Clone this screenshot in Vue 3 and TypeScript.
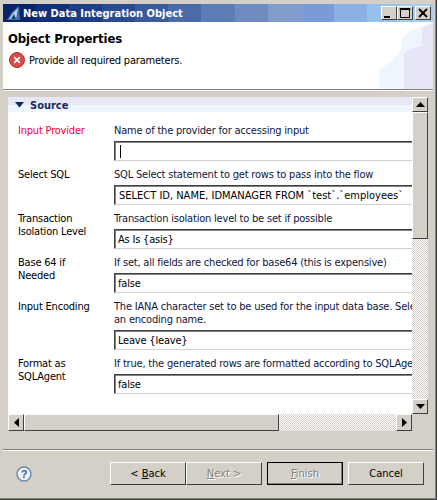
<script setup lang="ts">
interface Row { label: string; required?: boolean; desc: string[]; value: string; caret?: boolean; mono?: boolean }
const rows: Row[] = [
  { label: 'Input Provider', required: true, desc: ['Name of the provider for accessing input'], value: '', caret: true },
  { label: 'Select SQL', desc: ['SQL Select statement to get rows to pass into the flow'], value: 'SELECT ID, NAME, IDMANAGER FROM `test`.`employees`', mono: true },
  { label: 'Transaction Isolation Level', desc: ['Transaction isolation level to be set if possible'], value: 'As Is {asis}' },
  { label: 'Base 64 if Needed', desc: ['If set, all fields are checked for base64 (this is expensive)'], value: 'false' },
  { label: 'Input Encoding', desc: ['The IANA character set to be used for the input data base. Select', 'an encoding name.'], value: 'Leave {leave}' },
  { label: 'Format as SQLAgent', desc: ['If true, the generated rows are formatted according to SQLAgent'], value: 'false' },
]
const bands = ['#0a246a', '#12307a', '#1d3d84', '#2b4b90', '#3a5a9b', '#4a6aa8', '#5c7cb5', '#6f8cc0', '#7f9ccb', '#7b9bd6', '#8ab0e4', '#97c0ea', '#a6caf0']
</script>

<template>
  <div class="window">
    <div class="titlebar">
      <div class="bands"><span v-for="b in bands" :key="b" class="band" :style="{ background: b }"></span></div>
      <svg class="appicon" width="16" height="16" viewBox="0 0 16 16">
        <path d="M1 15 L6 7 L13 1 L14 15 Z" fill="#3d6fa8" />
        <path d="M3 14 L7 8 L12 3 L10 14 Z" fill="#b9cfe6" />
        <path d="M5 14 L8 9 L10 14 Z" fill="#1c3c70" />
      </svg>
      <span class="title">New Data Integration Object</span>
      <div class="winbtns">
        <button class="wb"><svg width="14" height="12" viewBox="0 0 14 12"><rect x="2" y="9" width="6" height="2" fill="#000" /></svg></button>
        <button class="wb wb-gap"><svg width="14" height="12" viewBox="0 0 14 12"><path d="M2.5 2.5h9v8h-9z M2 1.5h10v1H2z" fill="none" stroke="#000" /></svg></button>
        <button class="wb wb-x"><svg width="14" height="12" viewBox="0 0 14 12"><path d="M3 2 L11 10 M11 2 L3 10" stroke="#000" stroke-width="1.8" /></svg></button>
      </div>
    </div>

    <div class="banner">
      <svg class="swoosh" width="100" height="67" viewBox="0 0 100 67">
        <path d="M46 67 V48 L57 40 L64 33 L69 26 V16 L79 8 L89 4 L100 1 V67 Z" fill="#eef5fd" />
        <path d="M71 67 V31 L80 26 L89 24 V6 L100 1 V67 Z" fill="#e6e6f6" />
      </svg>
      <h1 class="heading">Object Properties</h1>
      <div class="message">
        <svg width="16" height="16" viewBox="0 0 16 16">
          <circle cx="8" cy="8" r="7.5" fill="#dc4a4a" stroke="#b23232" />
          <path d="M5.2 5.2 L10.8 10.8 M10.8 5.2 L5.2 10.8" stroke="#fff" stroke-width="1.8" />
        </svg>
        <span>Provide all required parameters.</span>
      </div>
    </div>
    <div class="etched"></div>

    <div class="body">
      <div class="scrollgrid">
        <div class="viewport">
          <div class="section">
            <div class="section-head">
              <svg width="10" height="6" viewBox="0 0 10 6"><path d="M0 0 H9 L4.5 5.5 Z" fill="#14285f" /></svg>
              <span>Source</span>
            </div>
            <div class="rows">
              <div v-for="r in rows" :key="r.label" class="row">
                <div class="label" :class="{ required: r.required }">{{ r.label }}</div>
                <div class="field">
                  <div class="desc"><div v-for="d in r.desc" :key="d">{{ d }}</div></div>
                  <div class="input" :class="{ mono: r.mono }"><span v-if="r.caret" class="caret"></span>{{ r.value }}</div>
                </div>
              </div>
            </div>
          </div>
        </div>
        <div class="vbar">
          <div class="arrow"><svg width="9" height="5" viewBox="0 0 9 5"><path d="M0 5 H9 L4.5 0 Z" fill="#000" /></svg></div>
          <div class="thumb-v"></div>
          <div class="track"></div>
          <div class="arrow"><svg width="9" height="5" viewBox="0 0 9 5"><path d="M0 0 H9 L4.5 5 Z" fill="#000" /></svg></div>
        </div>
        <div class="hbar">
          <div class="arrow"><svg width="5" height="9" viewBox="0 0 5 9"><path d="M5 0 V9 L0 4.5 Z" fill="#000" /></svg></div>
          <div class="thumb-h"></div>
          <div class="track"></div>
          <div class="arrow"><svg width="5" height="9" viewBox="0 0 5 9"><path d="M0 0 V9 L5 4.5 Z" fill="#000" /></svg></div>
        </div>
      </div>
    </div>

    <div class="etched"></div>
    <div class="footer">
      <svg class="help" width="16" height="16" viewBox="0 0 16 16">
        <circle cx="8" cy="8" r="7" fill="#eef2f8" stroke="#6d86ad" stroke-width="1.4" />
        <text x="8" y="12" text-anchor="middle" font-size="11" font-weight="700" font-family="Liberation Sans" fill="#3d5c8f">?</text>
      </svg>
      <div class="buttons">
        <div class="pair">
          <button class="btn"><span>&lt; <u>B</u>ack</span></button>
          <button class="btn disabled"><span><u>N</u>ext &gt;</span></button>
        </div>
        <button class="btn default disabled"><span><u>F</u>inish</span></button>
        <button class="btn">Cancel</button>
      </div>
    </div>
  </div>
</template>

<style>
html, body { margin: 0; background: #fff; }
</style>

<style scoped>
.window {
  box-sizing: border-box; width: 437px; height: 500px; padding: 4px 3px 3px 3px;
  background: #d4d0c8; border-right: 1px solid #404040; border-bottom: 1px solid #404040;
  box-shadow: inset -1px -1px 0 #808080;
  display: flex; flex-direction: column;
  font-family: "DejaVu Sans Condensed", "DejaVu Sans", sans-serif; font-size: 11px; color: #000;
}
.titlebar { position: relative; height: 18px; flex: none; display: flex; align-items: center; padding-left: 3px; color: #fff; background: #0a246a; }
.bands { position: absolute; inset: 0; display: flex; }
.band { flex: 1; }
.appicon { position: relative; margin-right: 1px; }
.title { position: relative; font-weight: 700; font-size: 11px; }
.winbtns { position: relative; margin-left: auto; margin-right: 2px; display: flex; }
.wb { box-sizing: border-box; width: 16px; height: 14px; padding: 0; background: #d4d0c8; border: 1px solid; border-color: #fff #404040 #404040 #fff; display: flex; align-items: center; justify-content: center; }
.wb-gap { margin-right: 2px; }
.banner { position: relative; height: 67px; flex: none; background: #fff; overflow: hidden; }
.swoosh { position: absolute; right: 0; top: 0; }
.heading { position: relative; margin: 0; padding: 7px 0 0 5px; font-size: 13px; font-weight: 700; line-height: 20px; letter-spacing: -0.1px; }
.message { position: relative; display: flex; align-items: center; gap: 4px; margin: 3px 0 0 6px; letter-spacing: -0.2px; }
.etched { height: 1px; flex: none; background: #808080; border-bottom: 1px solid #fff; }
.body { flex: 1; padding: 6px 6px 18px 5px; min-height: 0; }
.scrollgrid { display: grid; grid-template-columns: 404px 16px; grid-template-rows: 317px 17px; }
.viewport { background: #fff; overflow: hidden; }
.section { width: 520px; letter-spacing: -0.2px; }
.section-head { display: flex; align-items: center; gap: 5px; height: 15px; padding: 1px 0 0 7px; box-sizing: border-box; background: linear-gradient(#e7e7f5 50%, #f0f6fd 50%); color: #14285f; font-weight: 700; letter-spacing: 0; }
.rows { padding: 8px 0 0 10px; display: flex; flex-direction: column; }
.row { display: flex; height: 44px; }
.row:nth-child(5) { height: 57px; }
.label { box-sizing: border-box; width: 96px; padding: 4px 16px 0 0; line-height: 13px; }
.required { color: #f00040; }
.field { flex: 1; display: flex; flex-direction: column; }
.desc { line-height: 13px; padding-top: 4px; flex: 1; color: #10163c; }
.input { box-sizing: border-box; height: 20px; margin-bottom: 3px; padding-left: 3px; line-height: 19px; border: 1px solid; border-color: #404040 #d4d0c8 #d4d0c8 #404040; box-shadow: inset 1px 1px 0 #808080; }
.mono { padding-left: 4px; letter-spacing: 0; }
.caret { display: inline-block; width: 1px; height: 13px; margin: 3px 0 0 2px; background: #000; vertical-align: top; }
.vbar { display: flex; flex-direction: column; background: repeating-conic-gradient(#d4d0c8 0 25%, #fff 0 50%) 0 0 / 2px 2px; }
.hbar { display: flex; background: repeating-conic-gradient(#d4d0c8 0 25%, #fff 0 50%) 0 0 / 2px 2px; }
.arrow { box-sizing: border-box; width: 16px; height: 15px; flex: none; display: flex; align-items: center; justify-content: center; background: #d4d0c8; border: 1px solid; border-color: #fff #404040 #404040 #fff; }
.hbar .arrow { height: 17px; }
.thumb-v { height: 127px; flex: none; background: #d4d0c8; border: 1px solid; border-color: #fff #404040 #404040 #fff; box-sizing: border-box; }
.thumb-h { width: 255px; flex: none; background: #d4d0c8; border: 1px solid; border-color: #fff #404040 #404040 #fff; box-sizing: border-box; }
.track { flex: 1; }
.footer { box-sizing: border-box; height: 45px; flex: none; display: flex; align-items: flex-start; padding: 11px 0 0 13px; }
.help { margin-top: 4px; }
.buttons { margin-left: auto; margin-right: 9px; display: flex; gap: 5px; }
.pair { display: flex; }
.btn { box-sizing: border-box; width: 76px; height: 23px; padding: 0; font: inherit; color: #000; background: #d4d0c8; border: 1px solid; border-color: #fff #404040 #404040 #fff; }
.disabled { color: #808080; text-shadow: 1px 1px 0 #fff; }
.default { outline: 1px solid #000; outline-offset: -1px; box-shadow: inset -1px -1px 0 #808080; }
</style>
